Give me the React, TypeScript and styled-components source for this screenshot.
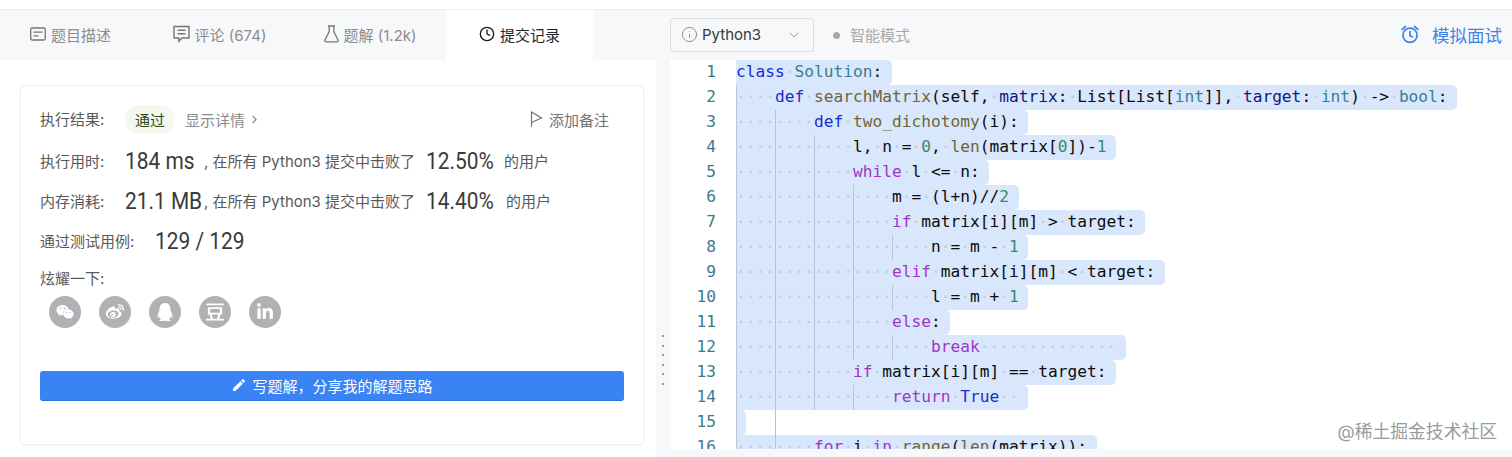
import React from 'react';
import styled, { createGlobalStyle } from 'styled-components';
import { ChevronDown, ChevronRight, Clock, Info } from 'lucide-react';
import { FaLinkedinIn, FaQq, FaWeibo, FaWeixin } from 'react-icons/fa';
import { MdEdit } from 'react-icons/md';
import { SiDouban } from 'react-icons/si';

const CODE: [number, string, number?][] = [
  [0, 'class Solution:'],
  [4, 'def searchMatrix($self, $matrix: List[List[int]], $target: int) -> bool:'],
  [8, 'def two_dichotomy($i):'],
  [12, 'l, n = 0, len(matrix[0])-1'],
  [12, 'while l <= n:'],
  [16, 'm = (l+n)//2'],
  [16, 'if matrix[i][m] > target:'],
  [20, 'n = m - 1'],
  [16, 'elif matrix[i][m] < target:'],
  [20, 'l = m + 1'],
  [16, 'else:'],
  [20, 'break', 14],
  [12, 'if matrix[i][m] == target:'],
  [16, 'return True', 2],
  [8, ''],
  [8, 'for i in range(len(matrix)):'],
];

const CONTROL = ['while', 'if', 'elif', 'else', 'break', 'return', 'for', 'in'];
const BLUE = ['class', 'def', 'True'];
const TYPES = ['Solution', 'int', 'bool'];
const FUNCS = ['searchMatrix', 'two_dichotomy', 'len', 'range'];

const tokenColor = (word: string): string => {
  if (word.startsWith('$')) return '#14197a';
  if (CONTROL.includes(word)) return '#a035c8';
  if (BLUE.includes(word)) return '#1a2bd0';
  if (TYPES.includes(word)) return '#3a7d90';
  if (FUNCS.includes(word)) return '#6f6438';
  if (/^\d+$/.test(word)) return '#3a8a6a';
  return '#0c0c0c';
};

const GlobalStyle = createGlobalStyle`
  html, body {
    margin: 0;
    width: 1512px;
    height: 457px;
    overflow: hidden;
    background: #fff;
  }
  * {
    box-sizing: border-box;
  }
`;

const Page = styled.div`
  display: flex;
  flex-direction: column;
  height: 457px;
  font-family: Inter, "Noto Sans CJK SC", sans-serif;
  font-size: 15px;
  color: #595959;
  position: relative;
`;

const TopStrip = styled.div`
  height: 10px;
  border-bottom: 1px solid #eceef0;
`;

const Header = styled.div`
  display: flex;
  height: 50px;
  background: #f7f8fa;
`;

const TabBar = styled.div`
  display: flex;
  width: 593px;
`;

const Tab = styled.div<{ $active?: boolean; $width: number }>`
  width: ${({ $width }) => $width}px;
  display: flex;
  align-items: center;
  justify-content: center;
  gap: 5px;
  padding-bottom: 2px;
  background: ${({ $active }) => ($active ? '#fff' : 'transparent')};
  color: ${({ $active }) => ($active ? '#262626' : '#8c8c8c')};
  &:nth-child(3) {
    padding-right: 4px;
  }
  svg {
    color: ${({ $active }) => ($active ? '#1a1a1a' : '#757575')};
  }
`;

const EditorBar = styled.div`
  flex: 1;
  display: flex;
  align-items: center;
  padding: 0 10px 0 77px;
`;

const LangSelect = styled.div`
  width: 144px;
  height: 34px;
  display: flex;
  align-items: center;
  gap: 4px;
  padding: 0 11px 1px 10px;
  border: 1px solid #dcdee0;
  border-radius: 3px;
  color: #3a3a3a;
  svg:first-child {
    color: #8c8c8c;
  }
  svg:last-child {
    margin-left: auto;
    color: #a0a0a0;
  }
`;

const ModeDot = styled.span`
  width: 7px;
  height: 7px;
  border-radius: 50%;
  background: #a8a8a8;
  margin: 0 10px 0 19px;
`;

const ModeLabel = styled.span`
  padding-bottom: 2px;
  color: #a8a8a8;
`;

const Interview = styled.div`
  margin-left: auto;
  padding-bottom: 2px;
  display: flex;
  align-items: center;
  gap: 12px;
  color: #3f84e5;
  font-size: 17.5px;
`;

const Body = styled.div`
  flex: 1;
  min-height: 0;
  display: flex;
`;

const LeftPane = styled.div`
  width: 656px;
  padding: 25px 12px 12px 20px;
`;

const Card = styled.div`
  height: 360px;
  padding: 19px 19px;
  border: 1px solid #eff0f1;
  border-radius: 5px;
  box-shadow: 0 1px 3px rgba(0, 0, 0, 0.03);
`;

const ResultRow = styled.div`
  display: flex;
  align-items: center;
  height: 29px;
  margin-bottom: 7px;
`;

const Row = styled.div`
  display: flex;
  align-items: center;
  height: 40px;
`;

const Label = styled.span<{ $width?: number }>`
  width: ${({ $width }) => $width ?? 85}px;
  flex-shrink: 0;
  padding-bottom: 2px;
`;

const PassBadge = styled.span`
  width: 50px;
  height: 29px;
  padding-bottom: 1px;
  border-radius: 15px;
  display: flex;
  align-items: center;
  justify-content: center;
  background: #f4f9ef;
  color: #2d4a1f;
`;

const Details = styled.span`
  display: flex;
  align-items: center;
  gap: 3px;
  margin-left: 10px;
  padding-bottom: 1px;
  color: #8c8c8c;
`;

const AddNote = styled.span`
  display: flex;
  align-items: center;
  gap: 6px;
  margin-left: auto;
  padding: 0 15px 1px 0;
  color: #737373;
`;

const Stat = styled.span<{ $width: number }>`
  width: ${({ $width }) => $width}px;
  flex-shrink: 0;
  font-family: Roboto, sans-serif;
  font-size: 24px;
  color: #3a3a3a;
  white-space: pre;
  transform: scaleX(0.87);
  transform-origin: left center;
`;

const Note = styled.span<{ $width?: number }>`
  width: ${({ $width }) => ($width ? `${$width}px` : 'auto')};
  flex-shrink: 0;
  padding-bottom: 2px;
  white-space: pre;
`;

const ShareLabel = styled.div`
  height: 20px;
  margin-top: 8px;
  line-height: 20px;
`;

const ShareList = styled.div`
  display: flex;
  gap: 18px;
  margin: 7px 0 0 9px;
`;

const ShareIcon = styled.span`
  width: 32px;
  height: 32px;
  border-radius: 50%;
  display: flex;
  align-items: center;
  justify-content: center;
  background: #b0b1b4;
  color: #fff;
  font-size: 18px;
`;

const WriteButton = styled.div`
  height: 30px;
  margin-top: 43px;
  padding-bottom: 1px;
  display: flex;
  align-items: center;
  justify-content: center;
  gap: 5px;
  border-radius: 3px;
  background: #3a83f5;
  border-bottom: 1px solid #2f74de;
  color: #fff;
`;

const Splitter = styled.div`
  width: 14px;
  background: #f7f8fa;
  display: flex;
  flex-direction: column;
  align-items: center;
  justify-content: flex-start;
  padding-top: 275px;
  gap: 7.5px;
`;

const SplitDot = styled.span`
  width: 2px;
  height: 2px;
  background: #9a9a9a;
`;

const EditorPane = styled.div`
  flex: 1;
  min-width: 0;
  display: flex;
  flex-direction: column;
`;

const CodeArea = styled.div`
  flex: 1;
  min-height: 0;
  overflow: hidden;
  font-family: "DejaVu Sans Mono", monospace;
  font-size: 16.2px;
`;

const StatusBar = styled.div`
  height: 8px;
  background: #f7f8fa;
`;

const CodeRow = styled.div`
  display: flex;
  height: 25px;
  line-height: 24px;
`;

const LineNumber = styled.span`
  width: 46px;
  margin-right: 20px;
  text-align: right;
  color: #3d7a8c;
`;

const CodeLine = styled.span`
  position: relative;
  white-space: pre;
  flex: 1;
`;

const Selection = styled.span<{ $chars: number }>`
  display: inline-block;
  height: 25px;
  width: ${({ $chars }) => $chars}ch;
  background: #d9e7fc;
  border-radius: 0 5px 5px 0;
`;

const Guide = styled.span<{ $level: number }>`
  position: absolute;
  top: 0;
  bottom: 0;
  left: ${({ $level }) => $level * 4}ch;
  width: 1px;
  background: #b9c4d0;
`;

const Space = styled.span`
  color: #c0ccd9;
`;

const Word = styled.span<{ $color: string }>`
  color: ${({ $color }) => $color};
`;

const Watermark = styled.span`
  position: absolute;
  right: 15px;
  bottom: 14px;
  font-size: 17.8px;
  color: #9a9a9a;
  text-shadow: 0 0 2px #fff;
`;

const renderCode = (text: string) =>
  (text.match(/\s|\$?\w+|[^\s\w]+/g) ?? []).map((part, i) =>
    part === ' ' ? (
      <Space key={i}>·</Space>
    ) : (
      <Word key={i} $color={tokenColor(part)}>
        {part.replace('$', '')}
      </Word>
    )
  );

const App: React.FC = () => (
  <Page>
    <GlobalStyle />
    <TopStrip />
    <Header>
      <TabBar>
        <Tab $width={141}>
          <svg width="16" height="14" viewBox="0 0 16 14" fill="none" stroke="currentColor" strokeWidth="1.3">
            <rect x="0.7" y="1" width="14.6" height="12" rx="1.5" />
            <path d="M3.5 5.2h9M3.5 8.8h5" />
          </svg>
          题目描述
        </Tab>
        <Tab $width={157}>
          <svg width="17" height="18" viewBox="0 0 17 18" fill="none" stroke="currentColor" strokeWidth="1.4">
            <path d="M1 1.5h15v11.5H9l-3.2 3.2V13H1z" />
            <path d="M4.5 5.2h8M4.5 8.8h8" />
          </svg>
          评论 (674)
        </Tab>
        <Tab $width={148}>
          <svg width="15" height="18" viewBox="0 0 15 18" fill="none" stroke="currentColor" strokeWidth="1.3">
            <path d="M4 1h7M5.2 1v5.5L1 15a1.2 1.2 0 0 0 1 1.8h11a1.2 1.2 0 0 0 1-1.8L9.8 6.5V1" />
          </svg>
          题解 (1.2k)
        </Tab>
        <Tab $active $width={147}>
          <Clock size={16} strokeWidth={2} />
          提交记录
        </Tab>
      </TabBar>
      <EditorBar>
        <LangSelect>
          <Info size={17} strokeWidth={1.4} />
          Python3
          <ChevronDown size={16} strokeWidth={1.5} />
        </LangSelect>
        <ModeDot />
        <ModeLabel>智能模式</ModeLabel>
        <Interview>
          <svg width="20" height="20" viewBox="0 0 24 24" fill="none" stroke="currentColor" strokeWidth="2.1" strokeLinecap="round">
            <circle cx="12" cy="13.5" r="8.5" />
            <path d="M12 9v4.8l3 1.7M2.5 6.5 6.5 3M21.5 6.5 17.5 3" />
          </svg>
          模拟面试
        </Interview>
      </EditorBar>
    </Header>
    <Body>
      <LeftPane>
        <Card>
          <ResultRow>
            <Label>执行结果:</Label>
            <PassBadge>通过</PassBadge>
            <Details>
              显示详情
              <ChevronRight size={13} />
            </Details>
            <AddNote>
              <svg width="13" height="16" viewBox="0 0 13 16" fill="none" stroke="currentColor" strokeWidth="1.2">
                <path d="M1.5 15.5V1l10 6-10 4.5" />
              </svg>
              添加备注
            </AddNote>
          </ResultRow>
          <Row>
            <Label>执行用时:</Label>
            <Stat $width={79}>184 ms</Stat>
            <Note $width={222}>, 在所有 Python3 提交中击败了</Note>
            <Stat $width={78}>12.50%</Stat>
            <Note>的用户</Note>
          </Row>
          <Row>
            <Label>内存消耗:</Label>
            <Stat $width={79}>21.1 MB</Stat>
            <Note $width={222}>, 在所有 Python3 提交中击败了</Note>
            <Stat $width={80}>14.40%</Stat>
            <Note>的用户</Note>
          </Row>
          <Row>
            <Label $width={115}>通过测试用例:</Label>
            <Stat $width={100}>129 / 129</Stat>
          </Row>
          <ShareLabel>炫耀一下:</ShareLabel>
          <ShareList>
            <ShareIcon><FaWeixin /></ShareIcon>
            <ShareIcon><FaWeibo /></ShareIcon>
            <ShareIcon><FaQq /></ShareIcon>
            <ShareIcon><SiDouban /></ShareIcon>
            <ShareIcon><FaLinkedinIn /></ShareIcon>
          </ShareList>
          <WriteButton>
            <MdEdit size={16} />
            {'写题解\uFF0C分享我的解题思路'}
          </WriteButton>
        </Card>
      </LeftPane>
      <Splitter>
        {[0, 1, 2, 3, 4, 5].map((n) => (
          <SplitDot key={n} />
        ))}
      </Splitter>
      <EditorPane>
        <CodeArea>
          {CODE.map(([indent, text, trailing = 0], i) => {
            const chars = indent + text.replace(/\$/g, '').length + trailing + 1;
            return (
              <CodeRow key={i}>
                <LineNumber>{i + 1}</LineNumber>
                <CodeLine>
                  {text ? (
                    <Selection $chars={chars}>
                      {renderCode(' '.repeat(indent) + text + ' '.repeat(trailing))}
                    </Selection>
                  ) : (
                    <Selection $chars={1} />
                  )}
                  {Array.from({ length: indent / 4 }).map((_, level) => (
                    <Guide key={level} $level={level} />
                  ))}
                </CodeLine>
              </CodeRow>
            );
          })}
        </CodeArea>
        <StatusBar />
      </EditorPane>
    </Body>
    <Watermark>@稀土掘金技术社区</Watermark>
  </Page>
);

export default App;
